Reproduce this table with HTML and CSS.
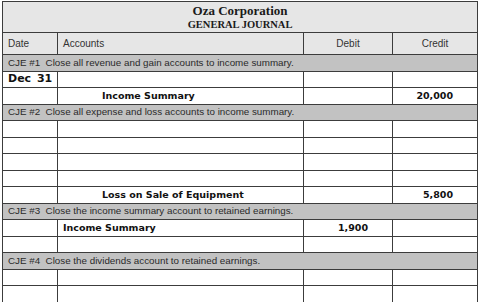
FILE: index.html
```
<!DOCTYPE html>
<html>
<head>
<meta charset="utf-8">
<link rel="stylesheet" href="styles.css">
</head>
<body>
<div class="page">
<table class="journal">
  <colgroup>
    <col class="c-date"><col class="c-acc"><col class="c-debit"><col class="c-credit">
  </colgroup>
  <tr class="title-row">
    <td colspan="4">
      <div class="company">Oza Corporation</div>
      <div class="jtitle">GENERAL JOURNAL</div>
    </td>
  </tr>
  <tr class="head-row">
    <td>Date</td><td>Accounts</td><td class="center">Debit</td><td class="center">Credit</td>
  </tr>
  <tr class="cje"><td colspan="4">CJE #1&nbsp; Close all revenue and gain accounts to income summary.</td></tr>
  <tr class="row"><td class="hw date">Dec 31</td><td></td><td></td><td></td></tr>
  <tr class="row"><td></td><td class="hw indent">Income Summary</td><td></td><td class="hw num">20,000</td></tr>
  <tr class="cje"><td colspan="4">CJE #2&nbsp; Close all expense and loss accounts to income summary.</td></tr>
  <tr class="row"><td></td><td></td><td></td><td></td></tr>
  <tr class="row"><td></td><td></td><td></td><td></td></tr>
  <tr class="row"><td></td><td></td><td></td><td></td></tr>
  <tr class="row"><td></td><td></td><td></td><td></td></tr>
  <tr class="row"><td></td><td class="hw indent">Loss on Sale of Equipment</td><td></td><td class="hw num">5,800</td></tr>
  <tr class="cje"><td colspan="4">CJE #3&nbsp; Close the income summary account to retained earnings.</td></tr>
  <tr class="row"><td></td><td class="hw">Income Summary</td><td class="hw num">1,900</td><td></td></tr>
  <tr class="row"><td></td><td></td><td></td><td></td></tr>
  <tr class="cje"><td colspan="4">CJE #4&nbsp; Close the dividends account to retained earnings.</td></tr>
  <tr class="row"><td></td><td></td><td></td><td></td></tr>
  <tr class="row"><td></td><td></td><td></td><td></td></tr>
</table>
</div>
</body>
</html>
```

FILE: styles.css
```
html, body {
  margin: 0;
  padding: 0;
  background: #ffffff;
}
.page {
  padding: 1px 0 0 2px;
}
.journal {
  border-collapse: collapse;
  table-layout: fixed;
  width: 475px;
  font-family: "Liberation Sans", Arial, sans-serif;
  font-size: 9.8px;
  color: #2e2e2e;
}
.c-date { width: 55px; }
.c-acc { width: 246px; }
.c-debit { width: 89px; }
.c-credit { width: 85px; }
.journal td {
  border: 1px solid #3c3c3c;
  padding: 0 0 0 5px;
  height: 15.5px;
  line-height: 12px;
  white-space: nowrap;
  overflow: hidden;
}
.title-row td {
  background: #e6e6e6;
  text-align: center;
  height: 30px;
  padding: 0;
  font-family: "Liberation Serif", "Times New Roman", serif;
  font-weight: bold;
  color: #1a1a1a;
}
.company {
  font-size: 13px;
  line-height: 15px;
}
.jtitle {
  font-size: 10.5px;
  line-height: 13px;
}
.head-row td {
  background: #e6e6e6;
  height: 21px;
  font-size: 10px;
  color: #333333;
}
.head-row td.center {
  text-align: center;
  padding: 0;
}
.cje td {
  background: #c2c2c2;
  color: #2a2a2a;
  padding-left: 5px;
}
.hw {
  font-family: "DejaVu Sans", sans-serif;
  font-weight: bold;
  font-size: 9.5px;
  color: #111111;
}
.hw.date {
  font-size: 11px;
  word-spacing: 2px;
}
.indent {
  padding-left: 44px !important;
}
.num {
  text-align: right;
  padding-right: 24px !important;
}
```
